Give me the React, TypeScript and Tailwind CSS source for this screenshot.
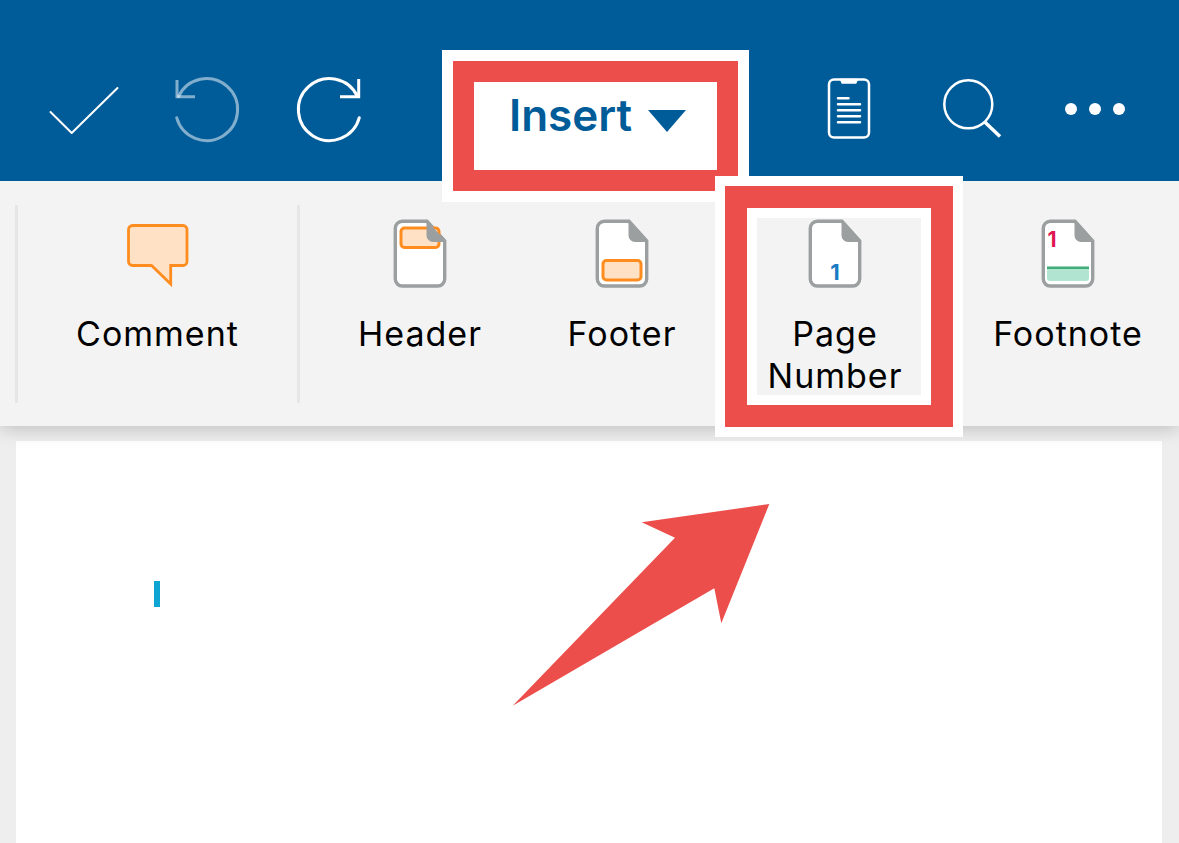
const DOC = 'M10.5 3.3H35L52.7 23V61a7 7 0 0 1-7 7H10.3a7 7 0 0 1-7-7V10.5a7 7 0 0 1 7-7.2Z'
const FOLD = 'M34.5 1.7L54.4 24H41a6.5 6.5 0 0 1-6.5-6.5Z'

const DocIcon = ({ children }: { children?: React.ReactNode }) => (
  <svg width="56" height="72" viewBox="0 0 56 72" fill="none">
    <path d={DOC} fill="#fff" stroke="#9b9f9f" strokeWidth="3.4" />
    {children}
    <path d={FOLD} fill="#9b9f9f" />
  </svg>
)

const CommentIcon = () => (
  <svg width="64" height="72" viewBox="0 0 64 72" fill="none" className="translate-x-[0.5px]">
    <path
      d="M6 7.5h50.5a4 4 0 0 1 4 4v32a4 4 0 0 1-4 4H44.2v18.5L25 47.5H6a4 4 0 0 1-4-4v-32a4 4 0 0 1 4-4Z"
      fill="#ffe2c6"
      stroke="#ff8c1f"
      strokeWidth="2.8"
    />
  </svg>
)

const ToolItem = ({ width, icon, label }: { width: string; icon: React.ReactNode; label: React.ReactNode }) => (
  <div className={`flex flex-col items-center pt-[37px] ${width}`}>
    {icon}
    <div className="mt-[23px] text-center text-[34px] leading-[42px] tracking-[1px] text-black">{label}</div>
  </div>
)

const Divider = () => <div className="mt-6 h-[198px] w-[3px] bg-[#e6e6e6]" />

const HeaderIcons = () => (
  <svg className="absolute left-0 top-0" width="1179" height="181" viewBox="0 0 1179 181" fill="none" stroke="#fff" strokeLinecap="round">
    {/* check */}
    <path d="M50.5 112L71.7 133L117.5 88" strokeWidth="2" strokeLinejoin="round" />
    {/* undo */}
    <g stroke="#fff" strokeOpacity="0.5" strokeWidth="3">
      <path d="M176.7 117.7A31 31 0 1 0 178.5 96.5" />
      <path d="M177 80V96.7H195" strokeLinecap="butt" />
    </g>
    {/* redo */}
    <path d="M359.3 117.7A31 31 0 1 1 357.5 96.5" strokeWidth="3" />
    <path d="M358.7 79V96.7H340" strokeWidth="3" strokeLinecap="butt" />
    {/* mobile view */}
    <rect x="829" y="79.5" width="40" height="58" rx="5" strokeWidth="2.5" />
    <path d="M840.7 79.5h16.6l-1.5 3.5h-13.6Z" fill="#fff" strokeWidth="1.5" />
    <path d="M838 98.3H848.5M838 104.3H860M838 110.3H860M838 116.3H860M838 122.3H860" strokeWidth="2.5" />
    {/* search */}
    <circle cx="968.3" cy="104.3" r="24" strokeWidth="2.5" />
    <path d="M985 122.3L1000 136.5" strokeWidth="3.5" strokeLinecap="butt" />
    {/* more */}
    <g fill="#fff" stroke="none">
      <circle cx="1071" cy="109" r="6" />
      <circle cx="1095" cy="109" r="6" />
      <circle cx="1119" cy="109" r="6" />
    </g>
  </svg>
)

export default function App() {
  return (
    <div className="relative h-[843px] w-[1179px] overflow-hidden bg-[#eeeeee] font-['Inter',sans-serif]">
      <header className="relative z-20 h-[181px] bg-[#005c99]">
        <HeaderIcons />
      </header>

      {/* toolbar */}
      <div className="relative z-10 flex h-[245px] bg-[#f3f3f3] pl-[15px] shadow-[0_2px_18px_rgba(0,0,0,0.22)]">
        <Divider />
        <ToolItem width="w-[279px]" icon={<CommentIcon />} label="Comment" />
        <Divider />
        <ToolItem
          width="w-[240px]"
          icon={
            <DocIcon>
              <rect x="9" y="10" width="38" height="19.5" rx="3.5" fill="#ffe2c6" stroke="#ff8c1f" strokeWidth="3" />
            </DocIcon>
          }
          label="Header"
        />
        <ToolItem
          width="w-[164px]"
          icon={
            <DocIcon>
              <rect x="9" y="42.5" width="38" height="19.5" rx="3.5" fill="#ffe2c6" stroke="#ff8c1f" strokeWidth="3" />
            </DocIcon>
          }
          label="Footer"
        />
        <ToolItem
          width="w-[262px]"
          icon={
            <DocIcon>
              <text x="28" y="61.5" textAnchor="middle" fontSize="22" fontWeight="700" fontFamily="Inter, sans-serif" fill="#1a7ac4">1</text>
            </DocIcon>
          }
          label={<>Page<br />Number</>}
        />
        <ToolItem
          width="w-[204px]"
          icon={
            <DocIcon>
              <text x="12" y="29" textAnchor="middle" fontSize="21" fontWeight="700" fontFamily="Inter, sans-serif" fill="#e0174f">1</text>
              <path d="M7 50h42v10a3 3 0 0 1-3 3H10a3 3 0 0 1-3-3Z" fill="#b2e5d1" />
              <rect x="7" y="48.5" width="42" height="2.5" fill="#3fae79" />
            </DocIcon>
          }
          label="Footnote"
        />
      </div>

      {/* document */}
      <main className="ml-4 mt-[15px] h-[402px] w-[1146px] bg-white pl-[138px] pt-[140px]">
        <div className="h-[26px] w-[6px] bg-[#0ea5d3]" />
      </main>

      {/* annotations */}
      <div className="absolute left-[442px] top-[50px] z-30 h-[152px] w-[307px] border-[11px] border-white">
        <div className="h-full w-full border-[21px] border-[#ec4f4b] bg-white">
          <div className="flex items-start gap-4 pl-[35px] pt-[7px]">
            <span className="text-[44px] font-semibold leading-[52px] text-[#005c99]">Insert</span>
            <svg className="mt-[21px]" width="38" height="22" viewBox="0 0 38 22">
              <path d="M0 0H38L19 22Z" fill="#005c99" />
            </svg>
          </div>
        </div>
      </div>
      <div className="absolute left-[715px] top-[176px] z-30 h-[261px] w-[248px] border-10 border-white">
        <div className="h-full w-full border-[22px] border-[#ec4f4b]">
          <div className="h-full w-full border-10 border-white" />
        </div>
      </div>
      <svg className="absolute left-0 top-0 z-30" width="1179" height="843" viewBox="0 0 1179 843">
        <path d="M512.7 705.7L675 537.7L641.7 522.3L769.3 504L721.3 623.3L714.3 588.3Z" fill="#ec4f4b" />
      </svg>
    </div>
  )
}
